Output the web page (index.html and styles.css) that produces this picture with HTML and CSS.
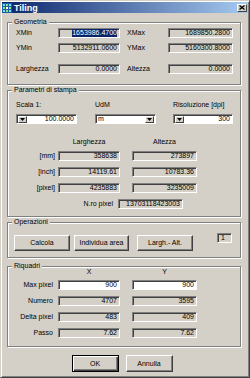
FILE: index.html
```html
<!DOCTYPE html>
<html lang="it">

<head>
    <meta charset="UTF-8">
    <meta name="viewport" content="width=device-width, initial-scale=1.0">
    <title>Tiling</title>
    <link rel="stylesheet" href="styles.css">
</head>

<body>
    <div class="window">
        <div class="titlebar">
            <div class="title">
                <svg class="appicon" width="10" height="10" viewBox="0 0 10 10">
                    <rect x="0" y="0" width="10" height="10" fill="#1c5fa8" />
                    <rect x="1" y="1" width="2" height="2" fill="#6fe0f0" />
                    <rect x="4" y="1" width="2" height="2" fill="#8ee07a" />
                    <rect x="7" y="1" width="2" height="2" fill="#6fe0f0" />
                    <rect x="1" y="4" width="2" height="2" fill="#8ee07a" />
                    <rect x="4" y="4" width="2" height="2" fill="#ffffff" />
                    <rect x="7" y="4" width="2" height="2" fill="#8ee07a" />
                    <rect x="1" y="7" width="2" height="2" fill="#6fe0f0" />
                    <rect x="4" y="7" width="2" height="2" fill="#8ee07a" />
                    <rect x="7" y="7" width="2" height="2" fill="#6fe0f0" />
                </svg>
                <span>Tiling</span>
            </div>
            <span class="closebtn">
                <svg width="6" height="5" viewBox="0 0 6 5">
                    <path d="M0.5 0.5L5.5 4.5M5.5 0.5L0.5 4.5" stroke="#000" stroke-width="1.3" />
                </svg>
            </span>
        </div>

        <div class="content">
            <!-- Geometria -->
            <div class="group geo">
                <div class="legend">Geometria</div>
                <div class="row mt2">
                    <span class="lbl w42">XMin</span>
                    <span class="field w62"><span class="sel">1653986.4700</span></span>
                    <span class="lbl w48 indent">XMax</span>
                    <span class="field w65">1689850.2800</span>
                </div>
                <div class="row mt5">
                    <span class="lbl w42">YMin</span>
                    <span class="field w62">5132911.0600</span>
                    <span class="lbl w48 indent">YMax</span>
                    <span class="field w65">5160300.8000</span>
                </div>
                <div class="row mt11">
                    <span class="lbl w42">Larghezza</span>
                    <span class="field w62">0.0000</span>
                    <span class="lbl w48 indent">Altezza</span>
                    <span class="field w65">0.0000</span>
                </div>
            </div>

            <!-- Parametri di stampa -->
            <div class="group params">
                <div class="legend">Parametri di stampa</div>
                <div class="labels mt7">
                    <span class="w79">Scala 1:</span>
                    <span class="w78">UdM</span>
                    <span>Risoluzione [dpi]</span>
                </div>
                <div class="row mt5">
                    <span class="field white w61 left-btn">
                        <span class="dd"><svg width="5" height="3" viewBox="0 0 5 3"><path d="M0 0h5L2.5 3z" /></svg></span>
                        <span class="val">100.0000</span>
                    </span>
                    <span class="field white w61 combo ml18">
                        <span class="val">m</span>
                        <span class="dd"><svg width="5" height="3" viewBox="0 0 5 3"><path d="M0 0h5L2.5 3z" /></svg></span>
                    </span>
                    <span class="field white w60 left-btn ml17">
                        <span class="dd"><svg width="5" height="3" viewBox="0 0 5 3"><path d="M0 0h5L2.5 3z" /></svg></span>
                        <span class="val">300</span>
                    </span>
                </div>
                <div class="heads mt14">
                    <span class="w42"></span>
                    <span class="w62 center">Larghezza</span>
                    <span class="w12"></span>
                    <span class="w65 center">Altezza</span>
                </div>
                <div class="row mt5">
                    <span class="lbl w39 right">[mm]</span>
                    <span class="field w62 ml3">358638</span>
                    <span class="field w65 ml12">273897</span>
                </div>
                <div class="row mt6">
                    <span class="lbl w39 right">[inch]</span>
                    <span class="field w62 ml3">14119.61</span>
                    <span class="field w65 ml12">10783.36</span>
                </div>
                <div class="row mt6">
                    <span class="lbl w39 right">[pixel]</span>
                    <span class="field w62 ml3">4235883</span>
                    <span class="field w65 ml12">3235009</span>
                </div>
                <div class="row mt6">
                    <span class="lbl w97 right">N.ro pixel</span>
                    <span class="field w65 ml5">13703118423003</span>
                </div>
            </div>

            <!-- Operazioni -->
            <div class="group ops">
                <div class="legend">Operazioni</div>
                <div class="btnrow">
                    <span class="btn w56">Calcola</span>
                    <span class="btn w55 ml4">Individua area</span>
                    <span class="btn w56 ml8">Largh.- Alt.</span>
                    <span class="field w15 count">1</span>
                </div>
            </div>

            <!-- Riquadri -->
            <div class="group tiles">
                <div class="legend">Riquadri</div>
                <div class="heads up2">
                    <span class="w42"></span>
                    <span class="w62 center">X</span>
                    <span class="w12"></span>
                    <span class="w65 center">Y</span>
                </div>
                <div class="row mt4">
                    <span class="lbl w37 right">Max pixel</span>
                    <span class="field white w62 ml5">900</span>
                    <span class="field white w65 ml12">900</span>
                </div>
                <div class="row mt6">
                    <span class="lbl w37 right">Numero</span>
                    <span class="field w62 ml5">4707</span>
                    <span class="field w65 ml12">3595</span>
                </div>
                <div class="row mt6">
                    <span class="lbl w37 right">Delta pixel</span>
                    <span class="field w62 ml5">483</span>
                    <span class="field w65 ml12">409</span>
                </div>
                <div class="row mt6">
                    <span class="lbl w37 right">Passo</span>
                    <span class="field w62 ml5">7.62</span>
                    <span class="field w65 ml12">7.62</span>
                </div>
            </div>

            <div class="footer">
                <span class="btn default">OK</span>
                <span class="btn">Annulla</span>
            </div>
        </div>
    </div>
</body>

</html>
```

FILE: styles.css
```css
* {
    margin: 0;
    padding: 0;
    box-sizing: border-box;
}

body {
    font-family: "Liberation Sans", Arial, sans-serif;
    font-size: 7px;
    line-height: 8px;
    color: #000;
    background-color: #d4d0c8;
}

.window {
    width: 250px;
    height: 378px;
    padding: 1px;
    border: 1px solid;
    border-color: #d4d0c8 #404040 #404040 #d4d0c8;
    box-shadow: inset 1px 1px 0 #fff, inset -1px -1px 0 #808080;
    background-color: #d4d0c8;
}

/* title bar */
.titlebar {
    height: 11px;
    display: flex;
    align-items: center;
    justify-content: space-between;
    padding-right: 1px;
    background: linear-gradient(to right, #0a246a, #a6caf0);
}

.title {
    display: flex;
    align-items: center;
    gap: 2px;
    color: #fff;
    font-weight: bold;
    font-size: 9px;
}

.appicon {
    display: block;
}

.closebtn {
    width: 10px;
    height: 8px;
    display: flex;
    align-items: center;
    justify-content: center;
    background-color: #d4d0c8;
    border: 1px solid;
    border-color: #fff #404040 #404040 #fff;
}

.closebtn svg {
    display: block;
}

.content {
    padding: 0 7px 0 5px;
}

/* group boxes */
.group {
    border: 1px solid #808080;
    box-shadow: inset 1px 1px 0 #fff, 1px 1px 0 #fff;
    padding-left: 8px;
    margin-top: 5px;
}

.legend {
    width: max-content;
    margin: -5px 0 0 -4px;
    padding: 0 2px;
    background-color: #d4d0c8;
    line-height: 8px;
}

.geo {
    margin-top: 9px;
    padding-bottom: 10px;
}

.params {
    padding-bottom: 7px;
}

.ops {
    padding-bottom: 6px;
}

.tiles {
    margin-top: 8px;
    padding-bottom: 8px;
}

/* rows */
.row {
    display: flex;
    align-items: center;
    height: 10px;
}

.labels,
.heads {
    display: flex;
    height: 8px;
}

.lbl {
    white-space: nowrap;
}

.indent {
    padding-left: 7px;
}

.right {
    text-align: right;
}

.center {
    text-align: center;
}

/* fields */
.field {
    height: 10px;
    display: flex;
    align-items: center;
    justify-content: flex-end;
    padding-right: 2px;
    border: 1px solid;
    border-color: #808080 #fff #fff #808080;
    box-shadow: inset 1px 1px 0 #404040;
    background-color: #d4d0c8;
    white-space: nowrap;
}

.field.white {
    background-color: #fff;
}

.sel {
    background-color: #0a246a;
    color: #fff;
}

.left-btn {
    justify-content: space-between;
    padding-left: 1px;
}

.combo {
    justify-content: space-between;
    padding-left: 2px;
    padding-right: 1px;
}

.dd {
    width: 9px;
    height: 7px;
    display: flex;
    align-items: center;
    justify-content: center;
    background-color: #d4d0c8;
    border: 1px solid;
    border-color: #fff #404040 #404040 #fff;
}

.dd svg {
    display: block;
}

/* buttons */
.btnrow {
    display: flex;
    align-items: flex-start;
    margin: 9px 0 0 -2px;
}

.btn {
    height: 16px;
    display: flex;
    align-items: center;
    justify-content: center;
    background-color: #d4d0c8;
    border: 1px solid;
    border-color: #fff #404040 #404040 #fff;
    box-shadow: inset -1px -1px 0 #808080;
    white-space: nowrap;
}

.count {
    margin: -2px 0 0 24px;
    justify-content: flex-start;
    padding-left: 3px;
}

.footer {
    display: flex;
    justify-content: center;
    gap: 7px;
    margin-top: 8px;
    padding-right: 4px;
}

.footer .btn {
    width: 47px;
    height: 17px;
}

.footer .btn.default {
    border: 1px solid #000;
    box-shadow: inset 1px 1px 0 #fff, inset -1px -1px 0 #404040, inset -2px -2px 0 #808080;
}

/* sizes and spacing */
.w12 { width: 12px; }
.w15 { width: 15px; }
.w37 { width: 37px; }
.w39 { width: 39px; }
.w42 { width: 42px; }
.w48 { width: 48px; }
.w55 { width: 55px; }
.w56 { width: 56px; }
.w60 { width: 60px; }
.w61 { width: 61px; }
.w62 { width: 62px; }
.w65 { width: 65px; }
.w78 { width: 78px; }
.w79 { width: 79px; }
.w97 { width: 97px; }

.ml3 { margin-left: 3px; }
.ml4 { margin-left: 4px; }
.ml5 { margin-left: 5px; }
.ml8 { margin-left: 8px; }
.ml12 { margin-left: 12px; }
.ml17 { margin-left: 17px; }
.ml18 { margin-left: 18px; }

.mt2 { margin-top: 2px; }
.mt4 { margin-top: 4px; }
.mt5 { margin-top: 5px; }
.mt6 { margin-top: 6px; }
.mt7 { margin-top: 7px; }
.mt11 { margin-top: 11px; }
.mt14 { margin-top: 14px; }
.up2 { margin-top: -2px; }
```
